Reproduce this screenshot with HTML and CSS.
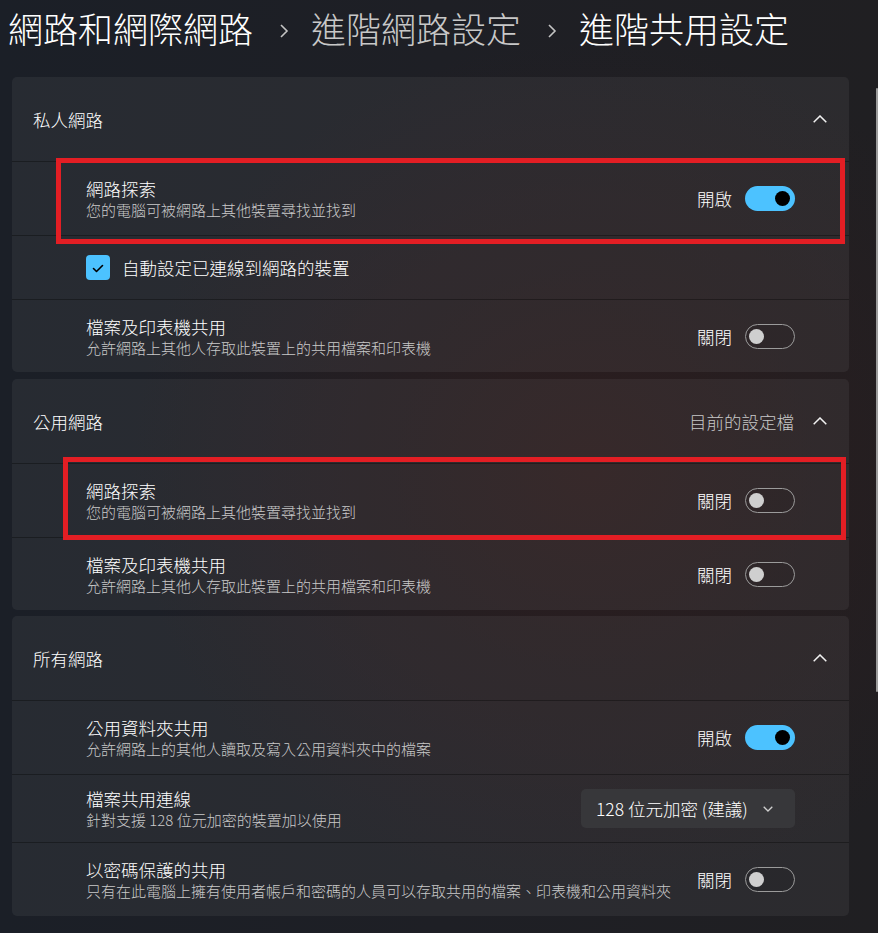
FILE: index.html
```html
<!DOCTYPE html>
<html lang="zh-Hant">
<head>
<meta charset="utf-8">
<title>進階共用設定</title>
<link rel="stylesheet" href="styles.css">
</head>
<body>
<h1 class="crumbs">
  <span class="crumb">網路和網際網路</span>
  <svg class="sep" viewBox="0 0 58 55" width="58" height="55"><polyline points="28,25 34,31 28,37" /></svg>
  <span class="crumb dim">進階網路設定</span>
  <svg class="sep" viewBox="0 0 58 55" width="58" height="55"><polyline points="28,25 34,31 28,37" /></svg>
  <span class="crumb">進階共用設定</span>
</h1>

<main class="cards">
  <section class="card">
    <div class="card-head">
      <span class="head-title">私人網路</span>
      <svg class="chev-up" viewBox="0 0 14 8" width="14" height="8"><polyline points="0.7,7.3 7,1 13.3,7.3" /></svg>
    </div>
    <div class="row">
      <div class="text"><div class="t">網路探索</div><div class="c">您的電腦可被網路上其他裝置尋找並找到</div></div>
      <span class="state">開啟</span><span class="toggle on"><span class="knob"></span></span>
    </div>
    <div class="row row-check">
      <span class="checkbox"><svg viewBox="0 0 24 24" width="24" height="24"><polyline points="7.5,12.5 10.5,15.5 16.5,9.5" /></svg></span>
      <span class="t">自動設定已連線到網路的裝置</span>
    </div>
    <div class="row row-last">
      <div class="text"><div class="t">檔案及印表機共用</div><div class="c">允許網路上其他人存取此裝置上的共用檔案和印表機</div></div>
      <span class="state">關閉</span><span class="toggle off"><span class="knob"></span></span>
    </div>
  </section>

  <section class="card">
    <div class="card-head">
      <span class="head-title">公用網路</span>
      <span class="head-note">目前的設定檔</span>
      <svg class="chev-up" viewBox="0 0 14 8" width="14" height="8"><polyline points="0.7,7.3 7,1 13.3,7.3" /></svg>
    </div>
    <div class="row">
      <div class="text"><div class="t">網路探索</div><div class="c">您的電腦可被網路上其他裝置尋找並找到</div></div>
      <span class="state">關閉</span><span class="toggle off"><span class="knob"></span></span>
    </div>
    <div class="row row-last">
      <div class="text"><div class="t">檔案及印表機共用</div><div class="c">允許網路上其他人存取此裝置上的共用檔案和印表機</div></div>
      <span class="state">關閉</span><span class="toggle off"><span class="knob"></span></span>
    </div>
  </section>

  <section class="card">
    <div class="card-head">
      <span class="head-title">所有網路</span>
      <svg class="chev-up" viewBox="0 0 14 8" width="14" height="8"><polyline points="0.7,7.3 7,1 13.3,7.3" /></svg>
    </div>
    <div class="row">
      <div class="text"><div class="t">公用資料夾共用</div><div class="c">允許網路上的其他人讀取及寫入公用資料夾中的檔案</div></div>
      <span class="state">開啟</span><span class="toggle on"><span class="knob"></span></span>
    </div>
    <div class="row row-select">
      <div class="text"><div class="t">檔案共用連線</div><div class="c">針對支援 128 位元加密的裝置加以使用</div></div>
      <div class="select"><span>128 位元加密 (建議)</span><svg class="chev-down" viewBox="0 0 10 6" width="10" height="6"><polyline points="0.7,0.7 5,5 9.3,0.7" /></svg></div>
    </div>
    <div class="row">
      <div class="text"><div class="t">以密碼保護的共用</div><div class="c">只有在此電腦上擁有使用者帳戶和密碼的人員可以存取共用的檔案、印表機和公用資料夾</div></div>
      <span class="state">關閉</span><span class="toggle off"><span class="knob"></span></span>
    </div>
  </section>
</main>

<div class="mark mark-1"></div>
<div class="mark mark-2"></div>
<div class="scrollbar"></div>
</body>
</html>
```

FILE: styles.css
```css
html, body {
  margin: 0;
  padding: 0;
}

body {
  width: 878px;
  height: 933px;
  overflow: hidden;
  position: relative;
  color: #ffffff;
  font-family: "Noto Sans CJK TC", "Noto Sans", "Liberation Sans", sans-serif;
  font-weight: 300;
  background:
    radial-gradient(ellipse 460px 430px at 590px 470px, rgba(44, 29, 30, 1) 0%, rgba(44, 29, 30, 0) 100%),
    linear-gradient(90deg, #1b1f27 0%, #1e1f25 50%, #201f22 100%);
}

.crumbs {
  margin: 0 0 22px 0;
  padding-left: 8px;
  height: 55px;
  display: flex;
  align-items: center;
  font-size: 35px;
  font-weight: 300;
  line-height: 55px;
  white-space: nowrap;
}

.crumb {
  color: #ffffff;
}

.crumb.dim {
  color: #c8c8c8;
}

.sep {
  display: block;
  flex: none;
}

.sep polyline {
  fill: none;
  stroke: #c4c4c4;
  stroke-width: 1.6;
}

.cards {
  display: flex;
  flex-direction: column;
  gap: 6px;
  padding: 0 29px 0 12px;
}

.card {
  background: rgba(255, 255, 255, 0.055);
  border-radius: 5px;
}

.card:first-child {
  margin-bottom: 1px;
}

.card-head {
  height: 84px;
  display: flex;
  align-items: center;
  padding: 0 22px 0 21px;
  font-size: 17.5px;
  line-height: 23px;
}

.head-title {
  flex: 1;
}

.head-note {
  color: #c8c8c8;
  margin-right: 19px;
}

.chev-up {
  display: block;
  flex: none;
}

.chev-up polyline {
  fill: none;
  stroke: #f2f2f2;
  stroke-width: 1.5;
}

.row {
  height: 74px;
  box-sizing: border-box;
  border-top: 1px solid rgba(0, 0, 0, 0.32);
  display: flex;
  align-items: center;
  padding: 0 54px 0 74px;
}

.row-last {
  height: 73px;
}

.row-check {
  height: 64px;
}

.row-select {
  height: 68px;
}

.text {
  flex: 1;
  min-width: 0;
}

.t {
  font-size: 17.5px;
  line-height: 23px;
  color: #ffffff;
}

.c {
  font-size: 15px;
  line-height: 20px;
  color: #c9c9c9;
  white-space: nowrap;
}

.state {
  font-size: 17.5px;
  line-height: 23px;
  margin-right: 13px;
  margin-left: 10px;
}

.toggle {
  width: 50px;
  height: 25px;
  box-sizing: border-box;
  border-radius: 13px;
  display: flex;
  align-items: center;
  flex: none;
}

.toggle .knob {
  width: 15px;
  height: 15px;
  border-radius: 50%;
}

.toggle.on {
  background: #4cc2ff;
  justify-content: flex-end;
  padding-right: 5px;
}

.toggle.on .knob {
  background: #000000;
}

.toggle.off {
  border: 1px solid #9b9b9b;
  background: rgba(0, 0, 0, 0.06);
  justify-content: flex-start;
  padding-left: 3px;
}

.toggle.off .knob {
  background: #cfcfcf;
}

.checkbox {
  width: 24px;
  height: 25px;
  border-radius: 4px;
  background: #4cc2ff;
  margin-right: 12px;
  display: flex;
  align-items: center;
  justify-content: center;
  flex: none;
}

.checkbox svg polyline {
  fill: none;
  stroke: #000000;
  stroke-width: 1.6;
  stroke-linecap: round;
  stroke-linejoin: round;
}

.select {
  width: 214px;
  height: 39px;
  box-sizing: border-box;
  border-radius: 5px;
  background: #37373a;
  display: flex;
  align-items: center;
  justify-content: space-between;
  padding: 0 22px 0 15px;
  font-size: 17.5px;
  line-height: 23px;
  flex: none;
}

.chev-down {
  display: block;
}

.chev-down polyline {
  fill: none;
  stroke: #cfcfcf;
  stroke-width: 1.3;
}

.mark {
  position: absolute;
  box-sizing: border-box;
  border: 5px solid #e31e24;
}

.mark-1 {
  left: 56px;
  top: 158px;
  width: 789px;
  height: 86px;
}

.mark-2 {
  left: 63px;
  top: 457px;
  width: 783px;
  height: 83px;
}

.scrollbar {
  position: absolute;
  left: 876px;
  top: 88px;
  width: 2px;
  height: 604px;
  border-radius: 1px;
  background: #9c9c9c;
}
```
